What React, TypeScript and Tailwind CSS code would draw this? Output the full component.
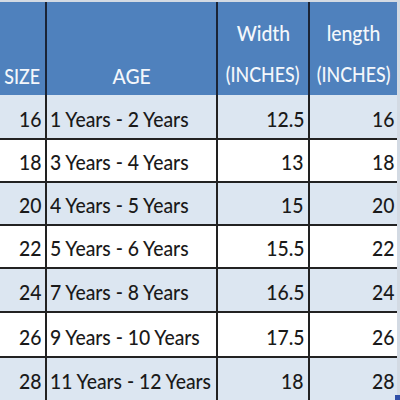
import React from "react";

const rows: [string, string, string, string][] = [
  ["16", "1 Years - 2 Years", "12.5", "16"],
  ["18", "3 Years - 4 Years", "13", "18"],
  ["20", "4 Years - 5 Years", "15", "20"],
  ["22", "5 Years - 6 Years", "15.5", "22"],
  ["24", "7 Years - 8 Years", "16.5", "24"],
  ["26", "9 Years - 10 Years", "17.5", "26"],
  ["28", "11 Years - 12 Years", "18", "28"],
];

const heights = ["h-[43px]", "h-[41px]", "h-[41px]", "h-[41px]", "h-[42px]", "h-[43px]", "h-[42px]"];

function T({ children, origin }: { children: React.ReactNode; origin: "l" | "r" | "c" }) {
  const o = origin === "l" ? "origin-left" : origin === "r" ? "origin-right" : "origin-center";
  return <span className={`inline-block whitespace-nowrap scale-x-[0.88] ${o}`}>{children}</span>;
}

function Caps({ children }: { children: React.ReactNode }) {
  return <span className="inline-block whitespace-nowrap scale-x-[0.81] origin-center">{children}</span>;
}

export default function App() {
  return (
    <div
      className="w-[400px] h-[400px] overflow-hidden bg-[#d3dae3] pt-[2px] pr-[3px] text-[22px] leading-[22px] font-medium"
      style={{ fontFamily: "Lato, 'Noto Sans', sans-serif" }}
    >
      {/* header */}
      <div className="flex h-[93px] bg-[#4f81bd] text-[#f4f7fb]">
        <div className="w-[47px] border-r-2 border-[#1a2436] flex items-end justify-center pb-[8px]">
          <Caps>SIZE</Caps>
        </div>
        <div className="w-[171px] border-r-2 border-[#1a2436] flex items-end justify-center pb-[8px]">
          <T origin="c">AGE</T>
        </div>
        <div className="w-[92px] border-r-2 border-[#1a2436] flex flex-col items-center justify-end gap-[19px] pb-[10px]">
          <T origin="c">Width</T>
          <Caps>(INCHES)</Caps>
        </div>
        <div className="w-[87px] flex flex-col items-center justify-end gap-[19px] pb-[10px]">
          <T origin="c">length</T>
          <Caps>(INCHES)</Caps>
        </div>
      </div>
      {rows.map((r, i) => (
        <div
          key={i}
          className={`flex text-[#1a1a1a] ${heights[i]} ${i % 2 === 0 ? "bg-[#dce6f1]" : "bg-white"} ${
            i < rows.length - 1 ? "border-b-2 border-[#222222] box-content" : ""
          }`}
        >
          <div className="w-[47px] border-r-2 border-[#222222] flex items-end justify-end pr-[3px] pb-[8px]">
            <T origin="r">{r[0]}</T>
          </div>
          <div className="w-[171px] border-r-2 border-[#222222] flex items-end justify-start pl-[3px] pb-[8px]">
            <T origin="l">{r[1]}</T>
          </div>
          <div className="w-[92px] border-r-2 border-[#222222] flex items-end justify-end pr-[4px] pb-[8px]">
            <T origin="r">{r[2]}</T>
          </div>
          <div className="w-[87px] flex items-end justify-end pr-[2px] pb-[8px] relative">
            <T origin="r">{r[3]}</T>
            {i === rows.length - 1 && (
              <div className="absolute right-[-3px] bottom-0 w-[5px] h-[5px] bg-[#2f4fa8]" />
            )}
          </div>
        </div>
      ))}
    </div>
  );
}
